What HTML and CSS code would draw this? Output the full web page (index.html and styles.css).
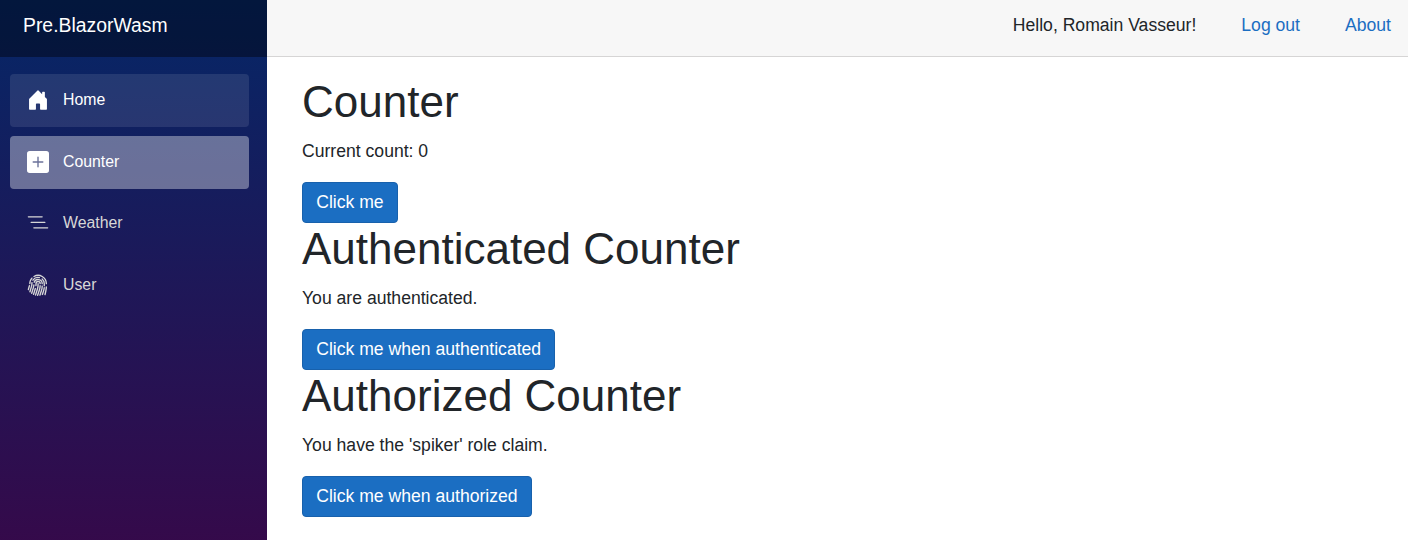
FILE: index.html
```html
<!DOCTYPE html>
<html lang="en">
<head>
  <meta charset="UTF-8">
  <title>Pre.BlazorWasm</title>
  <link rel="stylesheet" href="styles.css">
</head>
<body>
  <div class="page">
    <div class="sidebar">
      <div class="brand-row">
        <a class="brand" href="#">Pre.BlazorWasm</a>
      </div>
      <nav class="nav">
        <a class="nav-link hover" href="#">
          <svg class="bi" viewBox="0 0 16 16" fill="currentColor">
            <path d="M6.5 14.5v-3.505c0-.245.25-.495.5-.495h2c.25 0 .5.25.5.5v3.5a.5.5 0 0 0 .5.5h4a.5.5 0 0 0 .5-.5v-7a.5.5 0 0 0-.146-.354L13 5.793V2.5a.5.5 0 0 0-.5-.5h-1a.5.5 0 0 0-.5.5v1.293L8.354 1.146a.5.5 0 0 0-.708 0l-6 6A.5.5 0 0 0 1.5 7.5v7a.5.5 0 0 0 .5.5h4a.5.5 0 0 0 .5-.5z"/>
          </svg>
          Home
        </a>
        <a class="nav-link active" href="#">
          <svg class="bi" viewBox="0 0 16 16" fill="currentColor">
            <path d="M2 0a2 2 0 0 0-2 2v12a2 2 0 0 0 2 2h12a2 2 0 0 0 2-2V2a2 2 0 0 0-2-2H2zm6.5 4.5v3h3a.5.5 0 0 1 0 1h-3v3a.5.5 0 0 1-1 0v-3h-3a.5.5 0 0 1 0-1h3v-3a.5.5 0 0 1 1 0z"/>
          </svg>
          Counter
        </a>
        <a class="nav-link" href="#">
          <svg class="bi" viewBox="0 0 16 16" fill="currentColor">
            <path fill-rule="evenodd" d="M4.5 11.5A.5.5 0 0 1 5 11h10a.5.5 0 0 1 0 1H5a.5.5 0 0 1-.5-.5zm-2-4A.5.5 0 0 1 3 7h10a.5.5 0 0 1 0 1H3a.5.5 0 0 1-.5-.5zm-2-4A.5.5 0 0 1 1 3h10a.5.5 0 0 1 0 1H1a.5.5 0 0 1-.5-.5z"/>
          </svg>
          Weather
        </a>
        <a class="nav-link" href="#">
          <svg class="bi finger" viewBox="0 0 16 16" fill="currentColor">
            <path d="M8.06 6.5a.5.5 0 0 1 .5.5v.776a11.5 11.5 0 0 1-.552 3.519l-1.331 4.14a.5.5 0 0 1-.952-.305l1.33-4.141a10.5 10.5 0 0 0 .504-3.213V7a.5.5 0 0 1 .5-.5Z"/>
            <path d="M6.06 7a2 2 0 1 1 4 0 .5.5 0 1 1-1 0 1 1 0 1 0-2 0v.332c0 .409-.022.816-.066 1.221A.5.5 0 0 1 6 8.447c.04-.37.06-.742.06-1.115V7Zm3.509 1a.5.5 0 0 1 .487.513 11.5 11.5 0 0 1-.587 3.339l-1.266 3.8a.5.5 0 0 1-.949-.317l1.267-3.8a10.5 10.5 0 0 0 .535-3.048A.5.5 0 0 1 9.569 8Zm-3.356 2.115a.5.5 0 0 1 .33.626L5.24 14.939a.5.5 0 1 1-.955-.296l1.303-4.199a.5.5 0 0 1 .625-.329Z"/>
            <path d="M4.759 5.833A3.501 3.501 0 0 1 11.559 7a.5.5 0 0 1-1 0 2.5 2.5 0 0 0-4.857-.833.5.5 0 1 1-.943-.334Zm.3 1.67a.5.5 0 0 1 .449.546 10.72 10.72 0 0 1-.4 2.031l-1.222 4.072a.5.5 0 1 1-.958-.287L4.15 9.793a9.72 9.72 0 0 0 .363-1.842.5.5 0 0 1 .546-.449Zm6 .647a.5.5 0 0 1 .5.5c0 1.28-.213 2.552-.632 3.762l-1.09 3.145a.5.5 0 0 1-.944-.327l1.089-3.145c.382-1.105.578-2.266.578-3.435a.5.5 0 0 1 .5-.5Z"/>
            <path d="M3.902 4.222a4.996 4.996 0 0 1 5.202-2.113.5.5 0 0 1-.208.979 3.996 3.996 0 0 0-4.163 1.69.5.5 0 0 1-.831-.556Zm6.72-.955a.5.5 0 0 1 .705-.052A4.99 4.99 0 0 1 13.059 7v1.5a.5.5 0 1 1-1 0V7a3.99 3.99 0 0 0-1.386-3.028.5.5 0 0 1-.051-.705ZM3.68 5.842a.5.5 0 0 1 .422.568c-.029.192-.044.39-.044.59 0 .71-.1 1.417-.298 2.1l-1.14 3.923a.5.5 0 1 1-.96-.279L2.8 8.821A6.531 6.531 0 0 0 3.058 7c0-.25.019-.496.054-.736a.5.5 0 0 1 .568-.422Zm8.882 3.66a.5.5 0 0 1 .456.54c-.084 1-.298 1.986-.64 2.934l-.744 2.068a.5.5 0 0 1-.941-.338l.745-2.07a10.51 10.51 0 0 0 .584-2.678.5.5 0 0 1 .54-.456Z"/>
            <path d="M4.81 1.37A6.5 6.5 0 0 1 14.56 7a.5.5 0 1 1-1 0 5.5 5.5 0 0 0-8.25-4.765.5.5 0 0 1-.5-.865Zm-.89 1.257a.5.5 0 0 1 .04.706A5.478 5.478 0 0 0 2.56 7a.5.5 0 0 1-1 0c0-1.664.626-3.184 1.655-4.333a.5.5 0 0 1 .706-.04ZM1.915 8.02a.5.5 0 0 1 .346.616l-.779 2.767a.5.5 0 1 1-.962-.27l.778-2.767a.5.5 0 0 1 .617-.346Zm12.15.94a.5.5 0 0 1 .49.51c-.03 1.033-.161 2.06-.39 3.064l-.565 2.485a.5.5 0 0 1-.975-.222l.565-2.484c.214-.94.337-1.9.365-2.868a.5.5 0 0 1 .51-.485Z"/>
          </svg>
          User
        </a>
      </nav>
    </div>
    <main class="main">
      <div class="top-row">
        <span class="greeting">Hello, Romain Vasseur!</span>
        <a href="#">Log out</a>
        <a href="#">About</a>
      </div>
      <article class="content">
        <h1>Counter</h1>
        <p>Current count: 0</p>
        <button class="btn">Click me</button>
        <h1>Authenticated Counter</h1>
        <p>You are authenticated.</p>
        <button class="btn">Click me when authenticated</button>
        <h1>Authorized Counter</h1>
        <p>You have the 'spiker' role claim.</p>
        <button class="btn">Click me when authorized</button>
      </article>
    </main>
  </div>
</body>
</html>
```
FILE: styles.css
```css
* {
  box-sizing: border-box;
}

html {
  font-size: 17.6px;
}

html, body {
  margin: 0;
  height: 100%;
}

body {
  font-family: "Liberation Sans", Arial, sans-serif;
  font-size: 1rem;
  line-height: 1.5;
  color: #212529;
  background: #fff;
  overflow: hidden;
}

a {
  text-decoration: none;
}

.page {
  display: flex;
  height: 540px;
}

.sidebar {
  width: 267px;
  flex-shrink: 0;
  background-image: linear-gradient(180deg, rgb(5, 39, 103) 0%, #3a0647 112%);
}

.brand-row {
  height: 57px;
  padding: 0 23px;
  display: flex;
  align-items: center;
  background: rgba(0, 0, 0, 0.4);
}

.brand {
  color: #fff;
  font-size: 1.1rem;
  line-height: 27px;
  margin-bottom: 6px;
}

.nav {
  display: flex;
  flex-direction: column;
  gap: 8.6px;
  padding: 17px 18px 0 10px;
}

.nav-link {
  display: flex;
  align-items: center;
  height: 53px;
  padding: 0 0 1px 17px;
  border-radius: 4px;
  color: #d7d7d7;
  font-size: 0.9rem;
}

.nav-link.hover {
  background: rgba(255, 255, 255, 0.1);
  color: #fff;
}

.nav-link.active {
  background: rgba(255, 255, 255, 0.37);
  color: #fff;
}

.bi {
  width: 1.25rem;
  height: 1.25rem;
  margin-right: 14px;
  flex-shrink: 0;
}

.main {
  flex: 1;
  min-width: 0;
}

.top-row {
  height: 57px;
  display: flex;
  align-items: center;
  justify-content: flex-end;
  gap: 45px;
  padding: 0 17px 6px 0;
  background: #f7f7f7;
  border-bottom: 1px solid #d6d5d5;
}

.top-row a {
  color: #1b6ec2;
}

.content {
  padding: 18.6px 35px 0;
}

h1 {
  margin: 0 0 9.4px;
  font-size: 2.5rem;
  font-weight: 400;
  line-height: 1.2;
}

p {
  margin: 0 0 1rem;
}

.btn {
  display: block;
  height: 41px;
  padding: 0 0.75rem;
  font-family: inherit;
  font-size: 1rem;
  line-height: 1.5;
  color: #fff;
  background: #1b6ec2;
  border: 1px solid #1861ac;
  border-radius: 4px;
}
```
